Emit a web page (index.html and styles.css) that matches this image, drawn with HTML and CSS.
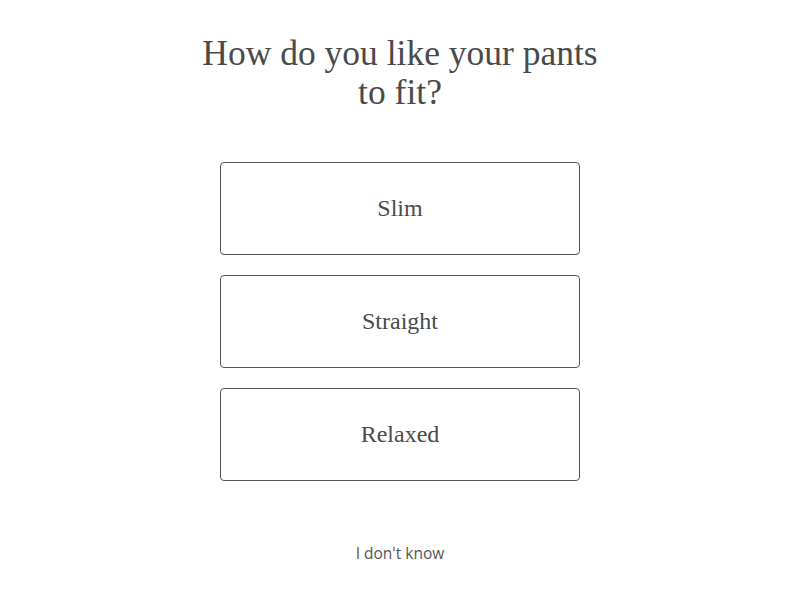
FILE: index.html
```html
<!DOCTYPE html>
<html>
<head>
<meta charset="utf-8">
<link rel="stylesheet" href="styles.css">
</head>
<body>
<main class="quiz">
  <h1 class="title">How do you like your pants<br>to fit?</h1>
  <div class="options">
    <button class="option">Slim</button>
    <button class="option">Straight</button>
    <button class="option">Relaxed</button>
  </div>
  <button class="skip">I don't know</button>
</main>
</body>
</html>
```
FILE: styles.css
```css
html, body {
  margin: 0;
  padding: 0;
  background: #fff;
}
.quiz {
  display: flex;
  flex-direction: column;
  align-items: center;
  padding-top: 34px;
  color: #4a4a4a;
}
.title {
  margin: 0;
  font-family: "Liberation Serif", serif;
  font-weight: normal;
  font-size: 35.5px;
  line-height: 39px;
  text-align: center;
  color: #4a4a4a;
}
.options {
  display: flex;
  flex-direction: column;
  gap: 20px;
  margin-top: 50px;
}
.option {
  width: 360px;
  height: 93px;
  border: 1px solid #555;
  border-radius: 4px;
  background: #fff;
  font-family: "Liberation Serif", serif;
  font-size: 24px;
  color: #4a4a4a;
  padding: 0;
}
.skip {
  margin-top: 61px;
  border: none;
  background: none;
  padding: 0;
  font-family: "Open Sans", sans-serif;
  font-size: 15.5px;
  color: #555;
}
```
